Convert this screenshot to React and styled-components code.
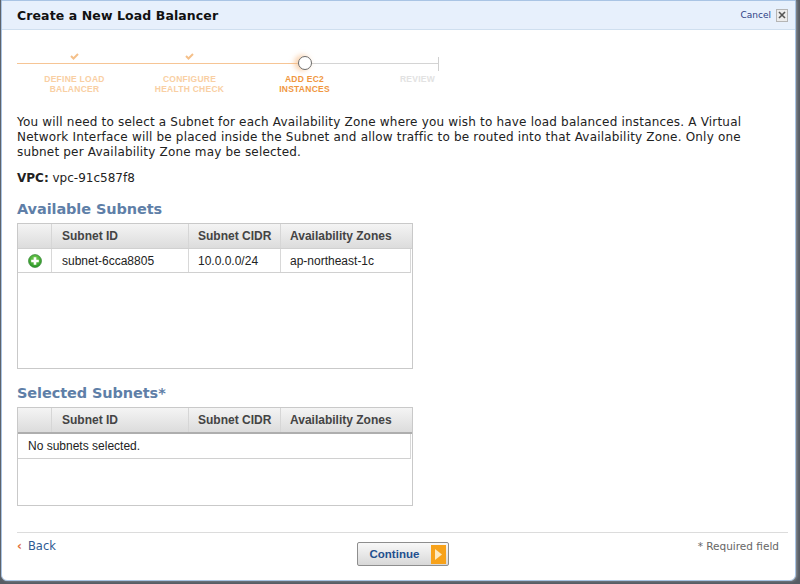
import React from "react";
import styled, { createGlobalStyle } from "styled-components";

const GlobalStyle = createGlobalStyle`
  html, body {
    margin: 0;
    padding: 0;
    background: #565c64;
  }
  body {
    height: 584px;
    overflow: hidden;
  }
`;

const COLUMNS = "34px 137px 92px 129px";

const steps = [
  { label: ["DEFINE LOAD", "BALANCER"], state: "done" },
  { label: ["CONFIGURE", "HEALTH CHECK"], state: "done" },
  { label: ["ADD EC2", "INSTANCES"], state: "current" },
  { label: ["REVIEW"], state: "todo" },
];

const stepColor = { done: "#f9cfa3", current: "#f0973f", todo: "#e2e2e2" };

const Dialog = styled.div`
  box-sizing: border-box;
  width: 795px;
  height: 581px;
  margin-left: 1px;
  background: #fff;
  border: 1px solid #a9c4e4;
  border-radius: 0 0 6px 6px;
  box-shadow: 1px 0 3px rgba(255, 255, 255, 0.35);
  font-family: "DejaVu Sans", Verdana, sans-serif;
  color: #222;
  display: flex;
  flex-direction: column;
  overflow: hidden;
`;

const TitleBar = styled.div`
  flex: none;
  box-sizing: border-box;
  height: 29px;
  padding: 0 7px 0 15px;
  background: #e7f0fc;
  border-bottom: 1px solid #cfdfef;
  display: flex;
  align-items: center;
  justify-content: space-between;
`;

const Title = styled.h1`
  margin: 0;
  font-size: 12.5px;
  font-weight: bold;
  color: #111;
  letter-spacing: 0.1px;
`;

const CancelGroup = styled.div`
  display: flex;
  align-items: center;
  gap: 5px;
`;

const CancelLink = styled.a`
  font-size: 9px;
  color: #2f3f85;
`;

const CloseBox = styled.span`
  box-sizing: border-box;
  width: 12px;
  height: 13px;
  display: flex;
  align-items: center;
  justify-content: center;
  background: #ececec;
  border: 1px solid #b5b5b5;
`;

const Content = styled.div`
  flex: 1;
  padding: 0 7px 0 15px;
  display: flex;
  flex-direction: column;
`;

const Stepper = styled.div`
  flex: none;
  position: relative;
  width: 422px;
  height: 65px;
  margin-top: 20px;
  display: grid;
  grid-template-columns: repeat(4, 115px);
  &::before {
    content: "";
    position: absolute;
    left: 0;
    top: 13px;
    width: 422px;
    height: 1px;
    background: #d4d4d4;
  }
  &::after {
    content: "";
    position: absolute;
    left: 0;
    top: 13px;
    width: 280px;
    height: 1px;
    background: #f6c595;
  }
`;

const StepEnd = styled.span`
  position: absolute;
  left: 421px;
  top: 7px;
  width: 1px;
  height: 14px;
  background: #d0d0d0;
`;

const Step = styled.div`
  position: relative;
  z-index: 1;
  display: flex;
  flex-direction: column;
  align-items: center;
  transform: translateX(${(p) => (p.$state === "todo" ? "-2px" : "0")});
`;

const Marker = styled.div`
  height: 14px;
  display: flex;
  align-items: flex-start;
  justify-content: center;
`;

const TickMark = styled.svg`
  margin-top: 3px;
`;

const Knob = styled.span`
  box-sizing: border-box;
  width: 14px;
  height: 14px;
  margin-top: 6px;
  background: #fff;
  border: 1.5px solid #6d6d6d;
  border-radius: 50%;
  box-shadow: -3px 0 5px 1px rgba(246, 180, 120, 0.55);
`;

const StepLabel = styled.div`
  margin-top: 10px;
  font-family: "Liberation Sans", Arial, sans-serif;
  font-size: 8.5px;
  font-weight: bold;
  line-height: 10px;
  letter-spacing: 0.25px;
  text-align: center;
  color: ${(p) => stepColor[p.$state]};
`;

const Intro = styled.p`
  margin: 0;
  width: 740px;
  font-size: 12px;
  line-height: 15px;
  color: #222;
  letter-spacing: 0.19px;
`;

const VpcLine = styled.p`
  margin: 11px 0 0;
  font-size: 12px;
  line-height: 15px;
  color: #222;
`;

const SectionTitle = styled.h2`
  margin: ${(p) => p.$top}px 0 5px;
  font-size: 14.5px;
  line-height: 18px;
  font-weight: bold;
  letter-spacing: -0.1px;
  color: #5f7fa8;
`;

const TableBox = styled.div`
  flex: none;
  box-sizing: border-box;
  width: 396px;
  height: ${(p) => p.$height}px;
  background: #fff;
  border: 1px solid #c9c9c9;
  font-family: "Liberation Sans", Arial, sans-serif;
  font-size: 12px;
  color: #222;
`;

const HeadRow = styled.div`
  display: grid;
  grid-template-columns: ${COLUMNS};
  height: 24px;
  background: linear-gradient(#f4f4f4, #dcdcdc);
  border-bottom: ${(p) => (p.$heavy ? "2px solid #aeaeae" : "1px solid #d0d0d0")};
`;

const HeadCell = styled.div`
  box-sizing: border-box;
  padding-left: ${(p) => p.$pad}px;
  display: flex;
  align-items: center;
  font-weight: bold;
  color: #444;
  border-right: 1px solid #d6d6d6;
  &:last-child {
    border-right: 0;
  }
`;

const BodyRow = styled.div`
  box-sizing: border-box;
  width: 393px;
  height: 24px;
  display: grid;
  grid-template-columns: ${COLUMNS};
  border-bottom: 1px solid #d0d0d0;
  border-right: 1px solid #d8d8d8;
`;

const BodyCell = styled.div`
  box-sizing: border-box;
  padding-left: ${(p) => p.$pad}px;
  display: flex;
  align-items: center;
  border-right: 1px solid #d8d8d8;
  &:last-child {
    border-right: 0;
  }
`;

const EmptyRow = styled.div`
  box-sizing: border-box;
  width: 393px;
  height: 25px;
  padding-left: 10px;
  display: flex;
  align-items: center;
  border-bottom: 1px solid #d0d0d0;
  border-right: 1px solid #d8d8d8;
`;

const Footer = styled.div`
  flex: none;
  margin-top: 26px;
  border-top: 1px solid #dcdcdc;
  height: 47px;
  display: grid;
  grid-template-columns: 1fr auto 1fr;
  align-items: start;
`;

const BackLink = styled.a`
  margin-top: 6px;
  display: flex;
  align-items: center;
  gap: 6px;
  font-size: 11.5px;
  line-height: 14px;
  color: #2f5a92;
`;

const BackArrow = styled.span`
  color: #e2703a;
  font-size: 12px;
  font-weight: bold;
  line-height: 12px;
`;

const ContinueButton = styled.button`
  box-sizing: border-box;
  width: 92px;
  height: 24px;
  margin-top: 9px;
  padding: 0 2px 0 12px;
  display: flex;
  align-items: center;
  justify-content: space-between;
  background: linear-gradient(#f8f8f8, #d8d8d8);
  border: 1px solid #8e8e8e;
  border-radius: 2px;
  font-family: "Liberation Sans", Arial, sans-serif;
  font-size: 11.5px;
  font-weight: bold;
  color: #234f8e;
`;

const ArrowTile = styled.span`
  width: 15px;
  height: 19px;
  display: flex;
  align-items: center;
  justify-content: center;
  background: #f7a21b;
`;

const RequiredNote = styled.div`
  margin-top: 7px;
  padding-right: 9px;
  text-align: right;
  font-size: 10.5px;
  line-height: 12px;
  color: #666;
`;

function Tick() {
  return (
    <TickMark width="9" height="7" viewBox="0 0 9 7">
      <path d="M1 3l2.5 2.5L8 1" fill="none" stroke="#f5c08a" strokeWidth="2" />
    </TickMark>
  );
}

function AddIcon() {
  return (
    <svg width="14" height="14" viewBox="0 0 14 14">
      <defs>
        <radialGradient id="addFill" cx="50%" cy="35%" r="70%">
          <stop offset="0" stopColor="#7fd357" />
          <stop offset="1" stopColor="#1f8f22" />
        </radialGradient>
      </defs>
      <circle cx="7" cy="7" r="6.5" fill="url(#addFill)" stroke="#2a7a2a" strokeWidth="0.6" />
      <path d="M7 3.2v7.6M3.2 7h7.6" stroke="#fff" strokeWidth="2.6" />
    </svg>
  );
}

function TableHead({ heavy }) {
  return (
    <HeadRow $heavy={heavy}>
      <HeadCell />
      <HeadCell $pad={10}>Subnet ID</HeadCell>
      <HeadCell $pad={9}>Subnet CIDR</HeadCell>
      <HeadCell $pad={9}>Availability Zones</HeadCell>
    </HeadRow>
  );
}

export default function App() {
  return (
    <>
      <GlobalStyle />
      <Dialog>
        <TitleBar>
          <Title>Create a New Load Balancer</Title>
          <CancelGroup>
            <CancelLink>Cancel</CancelLink>
            <CloseBox>
              <svg width="8" height="8" viewBox="0 0 8 8">
                <path d="M1 1l6 6M7 1L1 7" stroke="#555" strokeWidth="1.6" />
              </svg>
            </CloseBox>
          </CancelGroup>
        </TitleBar>
        <Content>
          <Stepper>
            <StepEnd />
            {steps.map((s) => (
              <Step key={s.label[0]} $state={s.state}>
                <Marker>
                  {s.state === "done" && <Tick />}
                  {s.state === "current" && <Knob />}
                </Marker>
                <StepLabel $state={s.state}>
                  {s.label.map((line) => (
                    <div key={line}>{line}</div>
                  ))}
                </StepLabel>
              </Step>
            ))}
          </Stepper>
          <Intro>
            You will need to select a Subnet for each Availability Zone where you wish to have load
            balanced instances. A Virtual Network Interface will be placed inside the Subnet and
            allow traffic to be routed into that Availability Zone. Only one subnet per
            Availability Zone may be selected.
          </Intro>
          <VpcLine>
            <b>VPC:</b> vpc-91c587f8
          </VpcLine>
          <SectionTitle $top={14}>Available Subnets</SectionTitle>
          <TableBox $height={146}>
            <TableHead />
            <BodyRow>
              <BodyCell $pad={10}>
                <AddIcon />
              </BodyCell>
              <BodyCell $pad={10}>subnet-6cca8805</BodyCell>
              <BodyCell $pad={9}>10.0.0.0/24</BodyCell>
              <BodyCell $pad={9}>ap-northeast-1c</BodyCell>
            </BodyRow>
          </TableBox>
          <SectionTitle $top={15}>Selected Subnets*</SectionTitle>
          <TableBox $height={99}>
            <TableHead heavy />
            <EmptyRow>No subnets selected.</EmptyRow>
          </TableBox>
          <Footer>
            <BackLink>
              <BackArrow>‹</BackArrow>
              Back
            </BackLink>
            <ContinueButton>
              Continue
              <ArrowTile>
                <svg width="7" height="11" viewBox="0 0 7 11">
                  <path d="M0 0l7 5.5L0 11z" fill="#fde9c0" />
                </svg>
              </ArrowTile>
            </ContinueButton>
            <RequiredNote>* Required field</RequiredNote>
          </Footer>
        </Content>
      </Dialog>
    </>
  );
}
